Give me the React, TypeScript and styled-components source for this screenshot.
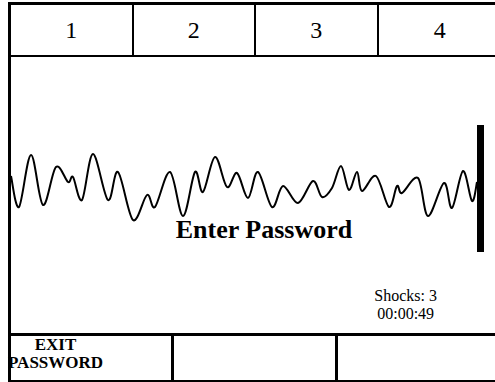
import styled, { createGlobalStyle } from "styled-components";

const GlobalStyle = createGlobalStyle`
  html, body {
    margin: 0;
    overflow: hidden;
    background: #fff;
  }
  body {
    font-family: "Liberation Serif", "Times New Roman", serif;
    color: #000;
  }
`;

// sampled points of the trace, in page coordinates
const wavePoints: [number, number][] = [
  [11, 176], [19, 207], [31, 155], [43, 205], [56, 167], [68, 182], [73, 177],
  [82, 200], [93, 154], [108, 200], [118, 172], [133, 220], [147, 195], [155, 207],
  [170, 172], [183, 216], [195, 172], [203, 192], [215, 157], [227, 187], [237, 173],
  [248, 198], [258, 172], [272, 207], [283, 186], [298, 203], [313, 181], [322, 197],
  [332, 188], [341, 166], [349, 190], [357, 172], [362, 191], [376, 176], [389, 207],
  [397, 186], [402, 193], [418, 178], [428, 216], [444, 183], [452, 208], [463, 171],
  [472, 201], [477, 182],
];

const smoothPath = (pts: [number, number][]) => {
  let d = `M${pts[0][0]} ${pts[0][1]}`;
  for (let i = 0; i < pts.length - 1; i++) {
    const p0 = pts[i - 1] || pts[i];
    const p1 = pts[i];
    const p2 = pts[i + 1];
    const p3 = pts[i + 2] || p2;
    const c1x = p1[0] + (p2[0] - p0[0]) / 6;
    const c1y = p1[1] + (p2[1] - p0[1]) / 6;
    const c2x = p2[0] - (p3[0] - p1[0]) / 6;
    const c2y = p2[1] - (p3[1] - p1[1]) / 6;
    d += ` C${c1x.toFixed(1)} ${c1y.toFixed(1)} ${c2x.toFixed(1)} ${c2y.toFixed(1)} ${p2[0]} ${p2[1]}`;
  }
  return d;
};

export default function App() {
  return (
    <>
      <GlobalStyle />
      <Panel>
        <Header>
          {["1", "2", "3", "4"].map((n) => (
            <HeaderCell key={n}>{n}</HeaderCell>
          ))}
        </Header>
        <Screen>
          <Trace width={490} height={276} viewBox="11 57 490 276">
            <path d={smoothPath(wavePoints)} fill="none" stroke="#000" strokeWidth={2} strokeLinejoin="round" />
            <rect x={477} y={125} width={7} height={127} fill="#000" />
          </Trace>
          <Message>Enter Password</Message>
          <Status>
            <div>Shocks: 3</div>
            <div>00:00:49</div>
          </Status>
        </Screen>
        <Footer>
          <SoftKey>
            <KeyLabel>EXIT<br />PASSWORD</KeyLabel>
          </SoftKey>
          <SoftKey />
          <SoftKey $last />
        </Footer>
      </Panel>
    </>
  );
}

const Panel = styled.div`
  box-sizing: border-box;
  width: 496px;
  height: 381px;
  margin: 2px 0 0 8px;
  border: 3px solid #000;
  display: grid;
  grid-template-rows: 52px 276px 47px;
`;

const Header = styled.div`
  display: grid;
  grid-template-columns: repeat(4, 1fr);
  border-bottom: 2px solid #000;
`;

const HeaderCell = styled.div`
  display: flex;
  align-items: center;
  justify-content: center;
  font-size: 24px;
  border-right: 2px solid #000;

  &:last-child {
    border-right: none;
  }
`;

const Screen = styled.div`
  display: grid;
  grid-template: 1fr / 1fr;

  & > * {
    grid-area: 1 / 1;
  }
`;

const Trace = styled.svg`
  display: block;
`;

const Message = styled.div`
  align-self: start;
  justify-self: center;
  margin: 160px 0 0 16px;
  font-size: 26px;
  font-weight: bold;
  line-height: 1;
`;

const Status = styled.div`
  align-self: end;
  justify-self: end;
  margin: 0 64px 10px 0;
  font-size: 16px;
  line-height: 18px;
  text-align: center;
`;

const Footer = styled.div`
  display: grid;
  grid-template-columns: repeat(3, 1fr);
  border-top: 3px solid #000;
`;

const SoftKey = styled.div<{ $last?: boolean }>`
  display: flex;
  align-items: flex-start;
  border-right: ${(p) => (p.$last ? "none" : "3px solid #000")};
`;

const KeyLabel = styled.div`
  margin-left: -3px;
  font-size: 17px;
  font-weight: bold;
  line-height: 18px;
  text-align: center;
`;
